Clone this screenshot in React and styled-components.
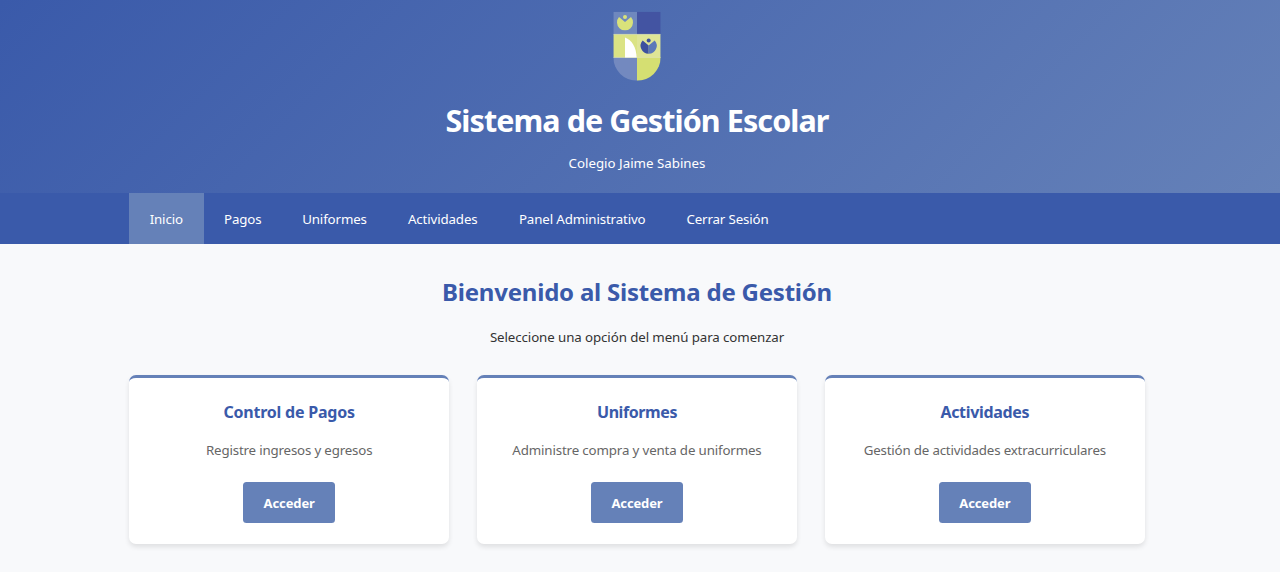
import React from 'react';
import styled, { createGlobalStyle } from 'styled-components';

const GlobalStyle = createGlobalStyle`
  * { box-sizing: border-box; margin: 0; padding: 0; }
  body {
    background: #f8f9fb;
    color: #333;
    font-family: 'Noto Sans', 'Open Sans', sans-serif;
    font-size: 13.3px;
    line-height: 22px;
  }
`;

const Page = styled.div`
  min-height: 572px;
  overflow: hidden;
`;

const Header = styled.header`
  display: flex;
  flex-direction: column;
  align-items: center;
  height: 193.4px;
  padding: 11px 6px 0 0;
  color: #fff;
  background: linear-gradient(135deg, #3a5aaa 0%, #6581b8 100%);
`;

const Logo = styled.svg`
  display: block;
  width: 48px;
  height: 70.5px;
`;

const Title = styled.h1`
  margin-top: 15.5px;
  font-size: 30.5px;
  line-height: 46px;
  letter-spacing: -0.92px;
`;

const Subtitle = styled.p`
  margin-top: 9px;
`;

const Nav = styled.nav`
  display: flex;
  height: 50.4px;
  padding-left: 129px;
  background: #3a5aaa;
`;

const NavLink = styled.a`
  display: flex;
  align-items: center;
  justify-content: center;
  width: ${(p) => p.$width}px;
  padding-top: 0.8px;
  color: #fff;
  letter-spacing: -0.13px;
  white-space: nowrap;
  background: ${(p) => (p.$active ? '#6581b8' : 'transparent')};
`;

const Main = styled.main`
  padding: 30.2px 135px 28px 129px;
  text-align: center;
`;

const Heading = styled.h2`
  color: #3a5aaa;
  font-size: 24px;
  line-height: 36px;
  letter-spacing: -0.22px;
`;

const Intro = styled.p`
  margin-top: 16px;
  letter-spacing: -0.09px;
`;

const Cards = styled.section`
  display: grid;
  grid-template-columns: repeat(3, 1fr);
  gap: 27.5px;
  margin-top: 27px;
`;

const Card = styled.article`
  display: flex;
  flex-direction: column;
  align-items: center;
  height: 169.3px;
  padding-top: 22px;
  background: #fff;
  border-top: 3px solid #6581b8;
  border-radius: 7px;
  box-shadow: 0 3px 5px rgba(0, 0, 0, 0.1);
`;

const CardTitle = styled.h3`
  color: #3a5aaa;
  font-size: 16px;
  line-height: 24px;
  letter-spacing: ${(p) => p.$tracking}px;
`;

const CardText = styled.p`
  margin-top: 15px;
  color: #666;
  letter-spacing: ${(p) => p.$tracking}px;
  white-space: nowrap;
`;

const Button = styled.a`
  display: flex;
  align-items: center;
  justify-content: center;
  width: 92.5px;
  height: 41.3px;
  margin-top: 20.6px;
  padding-top: 1px;
  color: #fff;
  font-weight: 700;
  font-size: 13px;
  letter-spacing: -0.12px;
  background: #6581b8;
  border-radius: 3.5px;
`;

const links = [
  { label: 'Inicio', width: 74.5, active: true },
  { label: 'Pagos', width: 78.5 },
  { label: 'Uniformes', width: 105 },
  { label: 'Actividades', width: 111.5 },
  { label: 'Panel Administrativo', width: 167.5 },
  { label: 'Cerrar Sesión', width: 123 },
];

const cards = [
  { title: 'Control de Pagos', titleTracking: -0.22, text: 'Registre ingresos y egresos', textTracking: -0.17 },
  { title: 'Uniformes', titleTracking: -0.42, text: 'Administre compra y venta de uniformes', textTracking: -0.14 },
  { title: 'Actividades', titleTracking: -0.32, text: 'Gestión de actividades extracurriculares', textTracking: -0.18 },
];

function Shield() {
  return (
    <Logo viewBox="0 0 144 211" aria-label="Colegio Jaime Sabines">
      <clipPath id="shield">
        <path d="M1 2H143V139A71 70 0 0 1 1 139Z" />
      </clipPath>
      <g clipPath="url(#shield)">
        <rect width="72" height="70" fill="#6f88be" />
        <rect x="72" width="72" height="70" fill="#4354a2" />
        <rect y="70" width="72" height="70" fill="#dbe384" />
        <rect x="72" y="70" width="72" height="70" fill="#dfe596" />
        <rect y="139" width="72" height="72" fill="#7389bf" />
        <rect x="72" y="139" width="72" height="72" fill="#d5df72" />
        <path d="M0 70H144M0 139H144" stroke="#e9edb4" strokeWidth="2" />
        <path d="M36 79C57 87 70 109 71 139H36Z" fill="#fff" />
      </g>
      <path d="M18 18L36 33L54 18A24 24 0 1 1 18 18Z" fill="#d9e27b" />
      <circle cx="36" cy="18" r="6" fill="#d9e27b" />
      <path d="M89 88L107 103V128A24 24 0 0 1 89 88Z" fill="#3d519f" />
      <path d="M125 88L107 103V128A24 24 0 0 0 125 88Z" fill="#5c79b9" />
      <circle cx="107" cy="88" r="6" fill="#3d519f" />
    </Logo>
  );
}

export default function App() {
  return (
    <Page>
      <GlobalStyle />
      <Header>
        <Shield />
        <Title>Sistema de Gestión Escolar</Title>
        <Subtitle>Colegio Jaime Sabines</Subtitle>
      </Header>
      <Nav>
        {links.map((l) => (
          <NavLink key={l.label} $width={l.width} $active={l.active}>{l.label}</NavLink>
        ))}
      </Nav>
      <Main>
        <Heading>Bienvenido al Sistema de Gestión</Heading>
        <Intro>Seleccione una opción del menú para comenzar</Intro>
        <Cards>
          {cards.map((c) => (
            <Card key={c.title}>
              <CardTitle $tracking={c.titleTracking}>{c.title}</CardTitle>
              <CardText $tracking={c.textTracking}>{c.text}</CardText>
              <Button>Acceder</Button>
            </Card>
          ))}
        </Cards>
      </Main>
    </Page>
  );
}
